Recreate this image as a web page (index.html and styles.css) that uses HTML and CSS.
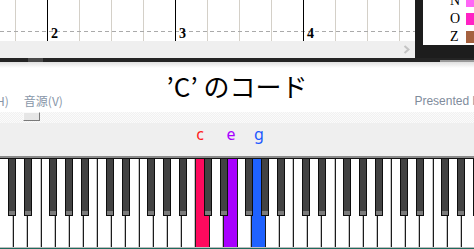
FILE: index.html
```html
<!DOCTYPE html>
<html>
<head>
    <meta charset="UTF-8">
    <title>コード表示</title>
    <link rel="stylesheet" href="styles.css">
</head>
<body>
<div class="top">
    <div class="chart">
        <div class="plot">
            <span class="bar-no">2</span>
            <span class="bar-no">3</span>
            <span class="bar-no">4</span>
        </div>
        <div class="hscroll">
            <svg width="7" height="9" viewBox="0 0 7 9"><polyline points="1.5,1 5.5,4.5 1.5,8" fill="none" stroke="#c4c4c4" stroke-width="2"/></svg>
        </div>
    </div>
    <div class="legend-frame">
        <div class="legend">
            <div class="legend-row"><span class="legend-name">N</span><i class="sw sw-n"></i></div>
            <div class="legend-row"><span class="legend-name">O</span><i class="sw sw-o"></i></div>
            <div class="legend-row"><span class="legend-name">Z</span><i class="sw sw-z"></i></div>
        </div>
    </div>
</div>
<div class="taskbar"><span class="tb-seg"></span><span class="tb-right"></span></div>
<div class="head">
    <div class="menu"><span class="menu-cut">(H)</span><span>音源(V)</span></div>
    <h1 class="title">’C’ のコード</h1>
    <div class="credit">Presented by</div>
</div>
<div class="slider"><span class="thumb"></span></div>
<div class="notes">
    <span class="note note-c">c</span>
    <span class="note note-e">e</span>
    <span class="note note-g">g</span>
</div>
<div class="piano">
    <div class="keys">
        <div class="wk"><i class="bk bk-c"></i></div>
        <div class="wk"><i class="bk bk-d"></i></div>
        <div class="wk"></div>
        <div class="wk"><i class="bk bk-f"></i></div>
        <div class="wk"><i class="bk bk-g"></i></div>
        <div class="wk"><i class="bk bk-a"></i></div>
        <div class="wk"></div>

        <div class="wk"><i class="bk bk-c"></i></div>
        <div class="wk"><i class="bk bk-d"></i></div>
        <div class="wk"></div>
        <div class="wk"><i class="bk bk-f"></i></div>
        <div class="wk"><i class="bk bk-g"></i></div>
        <div class="wk"><i class="bk bk-a"></i></div>
        <div class="wk"></div>

        <div class="wk on-c"><i class="bk bk-c"></i></div>
        <div class="wk"><i class="bk bk-d"></i></div>
        <div class="wk on-e"></div>
        <div class="wk"><i class="bk bk-f"></i></div>
        <div class="wk on-g"><i class="bk bk-g"></i></div>
        <div class="wk"><i class="bk bk-a"></i></div>
        <div class="wk"></div>

        <div class="wk"><i class="bk bk-c"></i></div>
        <div class="wk"><i class="bk bk-d"></i></div>
        <div class="wk"></div>
        <div class="wk"><i class="bk bk-f"></i></div>
        <div class="wk"><i class="bk bk-g"></i></div>
        <div class="wk"><i class="bk bk-a"></i></div>
        <div class="wk"></div>

        <div class="wk"><i class="bk bk-c"></i></div>
        <div class="wk"><i class="bk bk-d"></i></div>
        <div class="wk"></div>
        <div class="wk"><i class="bk bk-f"></i></div>
        <div class="wk"><i class="bk bk-g"></i></div>
        <div class="wk"><i class="bk bk-a"></i></div>
        <div class="wk"></div>
    </div>
    <div class="base"></div>
</div>
</body>
</html>
```
FILE: styles.css
```css
body, h1, div {
    margin: 0;
    padding: 0;
}
body {
    width: 474px;
    height: 249px;
    overflow: hidden;
    background: #fff;
}

/* score area */
.top {
    display: flex;
    height: 58px;
}
.chart {
    width: 415px;
    flex: none;
}
.plot {
    box-sizing: border-box;
    height: 41px;
    padding: 27px 0 0 51px;
    display: flex;
    overflow: hidden;
    background-color: #fff;
    background-image:
        linear-gradient(to right, #000 1px, transparent 1px),
        linear-gradient(to right, #aaa 4px, transparent 4px),
        linear-gradient(to right, #d4d0c8 1px, transparent 1px);
    background-size: 128px 100%, 7px 1px, 32px 100%;
    background-position: 47px 0, 0 31px, 15px 0;
    background-repeat: repeat-x;
}
.bar-no {
    width: 128px;
    flex: none;
    font: bold 14px/14px "Liberation Serif", serif;
    color: #000;
}
.hscroll {
    height: 17px;
    background: #efefef;
    display: flex;
    justify-content: flex-end;
    align-items: center;
    padding-right: 5px;
}
.legend-frame {
    flex: 1;
    background: #1d1d1d;
    padding-left: 8px;
}
.legend {
    height: 45px;
    background: #fff;
    overflow: hidden;
}
.legend-row {
    display: flex;
    align-items: center;
    height: 18px;
    padding-left: 27px;
}
.legend-row:first-child {
    margin-top: -8px;
}
.legend-name {
    width: 16px;
    flex: none;
    font: 14px "Liberation Serif", serif;
    color: #000;
}
.sw {
    width: 12px;
    height: 12px;
    flex: none;
}
.sw-n { background: #ff66f6; }
.sw-o { background: #ff22c4; }
.sw-z { background: #a5613f; }

.taskbar {
    height: 4px;
    background: #242424;
    display: flex;
}
.tb-seg {
    margin-left: 28px;
    width: 15px;
    background: #4a4a4a;
}
.tb-right {
    margin-left: auto;
    width: 34px;
    margin-top: 2px;
    background: #9a9a9a;
}

/* title */
.head {
    height: 48px;
    display: grid;
    grid-template-columns: minmax(0, 1fr) auto minmax(0, 1fr);
    background: linear-gradient(#e0e0e0, #fff 6px);
}
.menu {
    align-self: end;
    margin-bottom: 1px;
    display: flex;
    gap: 15px;
    white-space: nowrap;
    font: 12px/16px "Noto Sans CJK JP", sans-serif;
    color: #8896a8;
}
.menu-cut {
    margin-left: -8px;
}
.title {
    padding-top: 7px;
    font: normal 26px/34px "Noto Sans CJK JP", sans-serif;
    color: #000;
    white-space: nowrap;
}
.credit {
    align-self: end;
    margin-bottom: 1px;
    padding-left: 107px;
    white-space: nowrap;
    overflow: hidden;
    font: 12px/16px "Liberation Sans", sans-serif;
    color: #7f8c9c;
}

.slider {
    height: 11px;
    background: repeating-conic-gradient(#f1f1f1 0 25%, #fbfbfb 0 50%) 0 0 / 2px 2px;
}
.thumb {
    display: block;
    box-sizing: border-box;
    width: 17px;
    height: 9px;
    margin: 2px 0 0 23px;
    background: #e6e6e6;
    border: 1px solid;
    border-color: #fafafa #7a7a7a #7a7a7a #fafafa;
}

/* note names */
.notes {
    box-sizing: border-box;
    height: 33px;
    padding-top: 1px;
    background: #efefef;
    display: grid;
    grid-template-columns: repeat(34, 14px);
    font: 16px/20px "Noto Sans", sans-serif;
}
.note {
    text-align: center;
}
.note-c {
    grid-column: 15;
    color: #ff1c1c;
    padding-right: 6px;
}
.note-e {
    grid-column: 17;
    color: #a800ff;
}
.note-g {
    grid-column: 19;
    color: #1d58ff;
}

/* keyboard */
.piano {
    border-top: 2px solid #8a8a8a;
}
.keys {
    display: flex;
    height: 88px;
    border-top: 1px solid #111;
}
.wk {
    position: relative;
    box-sizing: border-box;
    width: 14px;
    flex: none;
    background: #fff;
    border-right: 1px solid #1c1c1c;
    box-shadow: inset -1px 0 #c4c4c4;
}
.wk.on-c { background: #ff0a5e; box-shadow: none; }
.wk.on-e { background: #a800ff; box-shadow: none; }
.wk.on-g { background: #1f62ff; box-shadow: none; }
.bk {
    position: absolute;
    top: 0;
    z-index: 1;
    box-sizing: border-box;
    width: 8px;
    height: 57px;
    background: #424242;
    border: 1px solid #0e0e0e;
    border-top: 0;
    box-shadow: inset 0 -4px #7b7b7b;
}
.bk-c { left: 8px; }
.bk-d { left: 10px; }
.bk-f { left: 7px; }
.bk-g { left: 9px; }
.bk-a { left: 11px; }
.base {
    height: 3px;
    border-top: 1px solid #bdbdbd;
    background: #1f6a5d;
}
```
